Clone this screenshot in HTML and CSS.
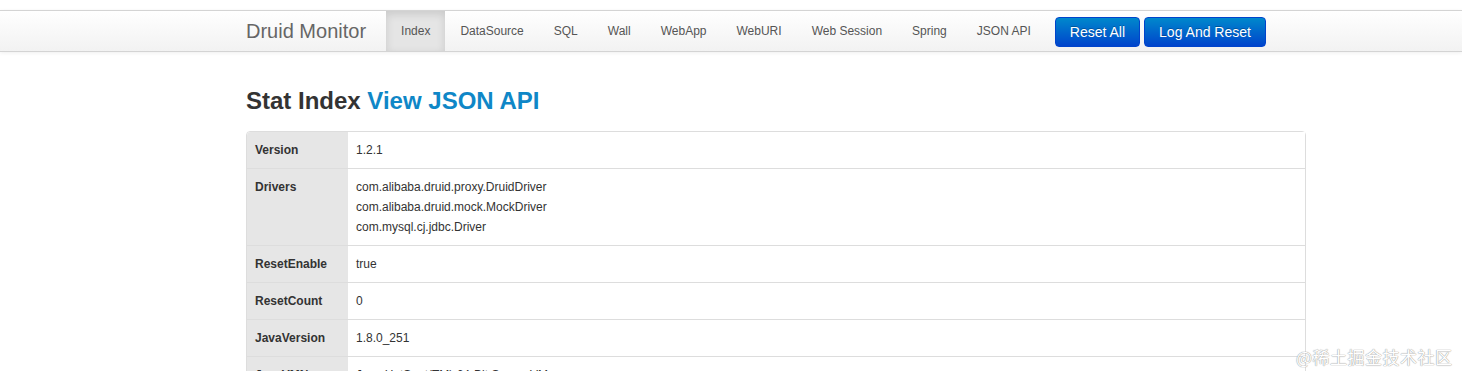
FILE: index.html
```html
<!DOCTYPE html>
<html>
<head>
<meta charset="utf-8">
<title>Druid Stat Index</title>
<link rel="stylesheet" href="styles.css">
</head>
<body>
<div class="navbar">
  <div class="container nav-inner">
    <a class="brand" href="#">Druid Monitor</a>
    <ul class="nav">
      <li class="active"><a href="#">Index</a></li>
      <li><a href="#">DataSource</a></li>
      <li><a href="#">SQL</a></li>
      <li><a href="#">Wall</a></li>
      <li><a href="#">WebApp</a></li>
      <li><a href="#">WebURI</a></li>
      <li><a href="#">Web Session</a></li>
      <li><a href="#">Spring</a></li>
      <li><a href="#">JSON API</a></li>
    </ul>
    <div class="btns">
      <a class="btn" href="#">Reset All</a>
      <a class="btn" href="#">Log And Reset</a>
    </div>
  </div>
</div>
<div class="container">
  <h3 class="title">Stat Index <a href="#">View JSON API</a></h3>
  <table class="stat">
    <tr><th>Version</th><td>1.2.1</td></tr>
    <tr><th>Drivers</th><td>com.alibaba.druid.proxy.DruidDriver<br>com.alibaba.druid.mock.MockDriver<br>com.mysql.cj.jdbc.Driver</td></tr>
    <tr><th>ResetEnable</th><td>true</td></tr>
    <tr><th>ResetCount</th><td>0</td></tr>
    <tr><th>JavaVersion</th><td>1.8.0_251</td></tr>
    <tr><th>JavaVMName</th><td>Java HotSpot(TM) 64-Bit Server VM</td></tr>
  </table>
</div>
<div class="watermark">@稀土掘金技术社区</div>
</body>
</html>
```

FILE: styles.css
```css
* { box-sizing: border-box; }
html, body { margin: 0; padding: 0; background: #fff; }
body {
  font-family: "Liberation Sans", Arial, sans-serif;
  font-size: 12px;
  line-height: 20px;
  color: #333;
  overflow: hidden;
}
a { text-decoration: none; }
.container {
  width: 1060px;
  margin-left: 246px;
}
.navbar {
  margin-top: 10px;
  background: linear-gradient(to bottom, #ffffff, #f2f2f2);
  border-top: 1px solid #d4d4d4;
  border-bottom: 1px solid #d4d4d4;
  box-shadow: 0 1px 4px rgba(0,0,0,0.065);
}
.nav-inner {
  display: flex;
  align-items: center;
  height: 40px;
}
.brand {
  font-size: 20px;
  line-height: 20px;
  color: #666;
  padding: 10px 20px 10px 0;
}
.nav {
  list-style: none;
  display: flex;
  margin: 0;
  padding: 0;
  height: 40px;
}
.nav li a {
  display: block;
  padding: 10px 15px;
  line-height: 20px;
  color: #555;
  font-size: 12px;
}
.nav li.active a {
  background: #e5e5e5;
  color: #555;
  box-shadow: inset 0 3px 8px rgba(0,0,0,0.125);
}
.btns {
  display: flex;
  gap: 4px;
  margin-left: 9px;
  margin-top: 2px;
}
.btn {
  display: block;
  font-size: 14px;
  line-height: 20px;
  padding: 4px 14px 4px;
  color: #fff;
  border-radius: 4px;
  background: linear-gradient(to bottom, #0088cc, #0044cc);
  border: 1px solid #0044cc;
  text-shadow: 0 -1px 0 rgba(0,0,0,0.25);
}
.title {
  font-size: 24px;
  line-height: 40px;
  margin: 29px 0 10px;
  font-weight: bold;
  color: #333;
}
.title a { color: #0f87c7; }
.stat {
  width: 100%;
  border-collapse: separate;
  border-spacing: 0;
  border: 1px solid #ddd;
  border-radius: 4px;
}
.stat th, .stat td {
  padding: 8px;
  line-height: 20px;
  text-align: left;
  vertical-align: top;
  border-top: 1px solid #ddd;
  font-size: 12px;
}
.stat tr:first-child th, .stat tr:first-child td { border-top: 0; }
.stat th {
  width: 101px;
  background: #e6e6e6;
  font-weight: bold;
  color: #333;
}
.stat tr:first-child th { border-top-left-radius: 4px; }
.stat td { background: #fff; color: #333; }
.watermark {
  position: absolute;
  left: 1296px;
  top: 346px;
  font-family: "Noto Sans CJK SC", sans-serif;
  font-size: 17px;
  line-height: 22px;
  color: #fff;
  text-shadow: 0 0 1px #999, 0 0 1px #999;
  letter-spacing: 0.5px;
}
```
